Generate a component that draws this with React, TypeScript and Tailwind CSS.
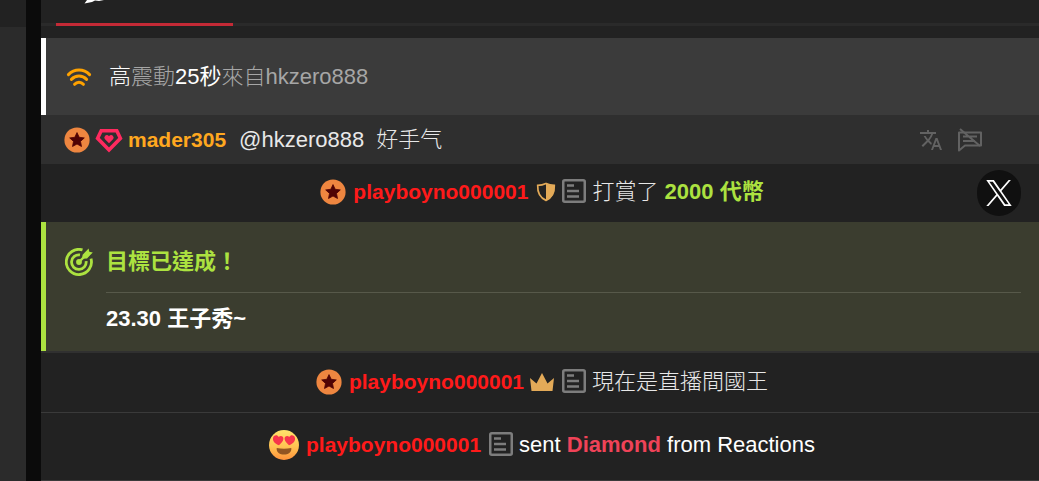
import type { ReactNode } from "react";
import { MdTranslate } from "react-icons/md";

function StarBadge() {
  return (
    <svg viewBox="0 0 26 26" className="size-[26px] shrink-0" aria-hidden="true">
      <circle cx="13" cy="13" r="12.6" fill="#ee8640" />
      <path
        d="M13 5.6l2.2 4.7 5.1.6-3.8 3.5 1 5.1-4.5-2.5-4.5 2.5 1-5.1-3.8-3.5 5.1-.6z"
        fill="#4f0304"
        stroke="#4f0304"
        strokeLinejoin="round"
        strokeWidth=".8"
      />
    </svg>
  );
}

function GemHeart() {
  return (
    <svg viewBox="0 0 28 26" className="h-[26px] w-7 shrink-0" aria-hidden="true">
      <path d="M6.2 3.7h15.6l3.6 7.6L14 23 2.6 11.3z" fill="none" stroke="#ff2a5f" strokeWidth="3.6" />
      <path
        d="M14 16.2l-4-4a2.5 2.5 0 0 1 0-3.3c1.1-1.2 3-1 4 .3 1-1.3 2.9-1.5 4-.3a2.5 2.5 0 0 1 0 3.3z"
        fill="#ff2a5f"
      />
    </svg>
  );
}

function Waves() {
  return (
    <svg viewBox="0 0 26 20" className="h-5 w-[26px] shrink-0" aria-hidden="true">
      <g fill="none" stroke="#ffa200" strokeWidth="3" strokeLinecap="round">
        <path d="M2.4 7.6c6-6.2 15.2-6.2 21.2 0" />
        <path d="M5.4 12.4c4.3-4.4 10.9-4.400 15.2 0" />
        <path d="M8.6 17.3c2.4-2.8 6.4-2.8 8.8 0" />
      </g>
    </svg>
  );
}

function ProfileNote() {
  return (
    <svg viewBox="0 0 24 24" className="mb-0.5 size-6 shrink-0" aria-hidden="true">
      <rect x="1.25" y="1.25" width="21.5" height="21.5" rx="1.5" fill="none" stroke="#7d7d7d" strokeWidth="2.5" />
      <path d="M5 6.5h7M5 12h12M5 17.5h12" stroke="#7d7d7d" strokeWidth="2.4" />
    </svg>
  );
}

function HalfShield() {
  return (
    <svg viewBox="0 0 20 20" className="size-5 shrink-0" aria-hidden="true">
      <path
        d="M10 1.5c2.8 1.4 5.6 1.9 8.3 1.9.3 6.8-1.5 12.1-8.3 15-6.8-2.9-8.6-8.2-8.3-15 2.7 0 5.5-.5 8.3-1.9z"
        fill="none"
        stroke="#e3aa58"
        strokeWidth="1.7"
      />
      <path d="M10 1.5c2.8 1.4 5.6 1.9 8.3 1.9.3 6.8-1.5 12.1-8.3 15z" fill="#e3aa58" />
    </svg>
  );
}

function Crown() {
  return (
    <svg viewBox="0 0 24 20" className="h-5 w-6 shrink-0" aria-hidden="true">
      <path d="M0 6l6.5 5.500L12 1l5.500 10.500L24 6l-1.500 13h-21z" fill="#e3aa58" />
    </svg>
  );
}

function Target() {
  return (
    <svg viewBox="0 0 28 28" className="size-7 shrink-0" aria-hidden="true">
      <g fill="none" stroke="#ace240" strokeWidth="2.8">
        <path d="M17.5 1.9A12.6 12.6 0 1 0 26 10.6" />
        <path d="M15 6.9A7.3 7.3 0 1 0 21.1 13.2" />
        <path d="M14 14l7-7" strokeWidth="2.4" />
      </g>
      <circle cx="14" cy="14" r="2.9" fill="#ace240" />
      <path d="M17 10.800l.6-4L23.600.4l.7 3.300 3.500.7-5.800 6z" fill="#ace240" />
    </svg>
  );
}

function IgnoreUser() {
  return (
    <svg viewBox="0 0 26 24" className="h-6 w-[26px]" aria-hidden="true">
      <g fill="none" stroke="#626262" strokeWidth="2">
        <path d="M2 4.500h22v13H8l-6 5z" strokeLinejoin="round" />
        <path d="M6 8.500h14M6 13h12M3 1l20 17" />
      </g>
    </svg>
  );
}

function HeartEyes() {
  return (
    <svg viewBox="0 0 30 30" className="size-[30px] shrink-0" aria-hidden="true">
      <defs>
        <linearGradient id="face" x1="0" y1="0" x2="0" y2="1">
          <stop offset="0" stopColor="#ffe26b" />
          <stop offset=".55" stopColor="#ffc352" />
          <stop offset="1" stopColor="#ff923b" />
        </linearGradient>
      </defs>
      <circle cx="15" cy="15" r="15" fill="url(#face)" />
      <path d="M7.7 18c4.7 1.100 9.900 1.100 14.600 0 1.200 8.800-15.800 8.800-14.600 0z" fill="#925522" />
      <path
        d="M10 15.300C6.200 13.700 3.600 11.400 4 8.200 4.500 4.800 8.400 4.400 9.700 7c1.900-2.200 5-.8 4.700 2.100-.2 2.200-2.400 4.400-4.400 6.200z"
        fill="#f7354b"
      />
      <path
        d="M20 15.300c3.800-1.600 6.400-3.900 6-7.100-.5-3.400-4.400-3.800-5.700-1.200-1.900-2.200-5-.8-4.700 2.100.2 2.200 2.400 4.400 4.400 6.200z"
        fill="#f7354b"
      />
    </svg>
  );
}

function XLogo() {
  return (
    <svg viewBox="0 0 1200 1227" className="h-[26px] w-[26px]" aria-hidden="true">
      <path
        fill="#fff"
        d="M714.163 519.284L1160.890 0H1055.030L667.137 450.887L357.328 0H0L468.492 681.821L0 1226.370H105.866L515.491 750.218L842.672 1226.370H1200L714.137 519.284H714.163ZM569.165 687.828L521.697 619.934L144.011 79.694H306.615L611.412 515.685L658.880 583.579L1055.080 1150.300H892.476L569.165 687.854V687.828Z"
      />
    </svg>
  );
}

function UserName({ children }: { children: ReactNode }) {
  return (
    <a href="#user" className="ml-[7px] text-[21px] font-bold text-[#ff1a1a]">
      {children}
    </a>
  );
}

function EventRow({ children, className }: { children: ReactNode; className: string }) {
  return <div className={`flex items-center justify-center pl-1 ${className}`}>{children}</div>;
}

export default function App() {
  return (
    <div className="flex min-h-screen bg-[#222] font-['Liberation_Sans','Noto_Sans_CJK_TC',sans-serif] text-[22px] leading-8 whitespace-nowrap text-[#e8e8e8]">
      <aside className="w-[26px] shrink-0 bg-[#2b2b2b]">
        <div className="h-[27px] bg-[#222]" />
      </aside>
      <div className="w-[15px] shrink-0 bg-[#0b0b0b]" />
      <main className="min-w-0 flex-1">
        <nav className="flex h-[26px] border-b-[3px] border-[#2a2a2a] pl-[15px]">
          <button type="button" aria-label="Chat" className="flex h-[26px] w-[177px] items-start border-b-[3px] border-[#c42a36] pl-7">
            <svg viewBox="0 0 20 4" className="h-1 w-5" aria-hidden="true">
              <path d="M3 0h17l-5 1-4-.4L8 2 .5 3.500z" fill="#fff" />
            </svg>
          </button>
        </nav>

        <section className="mt-3 flex items-center border-l-[5px] border-white bg-[#3b3b3b] pt-[23px] pb-[22px] pl-5 font-light">
          <Waves />
          <p className="ml-[17px] text-[#a6a6a6]">
            <span className="text-white">高</span>震動<span className="font-normal text-white">25秒</span>來自hkzero888
          </p>
        </section>

        <section className="flex items-center bg-[#2f2f2f] pt-[9px] pb-2 pr-14 pl-[23px]">
          <StarBadge />
          <span className="ml-[5px] flex">
            <GemHeart />
          </span>
          <a href="#user" className="ml-[5px] text-[21px] font-bold text-[#ffa81f]">
            mader305
          </a>
          <p className="ml-[13px] font-light">
            @hkzero888&nbsp; 好手气
          </p>
          <div className="ml-auto flex items-center gap-3.5">
            <button type="button" aria-label="Translate">
              <MdTranslate className="size-6 text-[#626262]" />
            </button>
            <button type="button" aria-label="Ignore user">
              <IgnoreUser />
            </button>
          </div>
        </section>

        <div className="relative">
          <EventRow className="pt-3 pb-3.5">
            <StarBadge />
            <UserName>playboyno000001</UserName>
            <span className="ml-2 flex items-center gap-1.5">
              <HalfShield />
              <ProfileNote />
            </span>
            <p className="ml-1.5 font-light">
              打賞了 <strong className="font-bold text-[#ace240]">2000 代幣</strong>
            </p>
          </EventRow>
          <a
            href="#x"
            aria-label="X"
            className="absolute top-1.5 right-[18px] flex h-[46px] w-11 items-center justify-center rounded-full bg-[#101010]"
          >
            <XLogo />
          </a>
        </div>

        <section className="flex items-start border-l-[5px] border-[#ace240] bg-[#3b3d2f] pt-6 pr-[18px] pb-4 pl-[19px] font-bold">
          <span className="mt-0.5 flex">
            <Target />
          </span>
          <div className="ml-[13px] flex-1">
            <h2 className="pb-3.5 text-[#ace240]">目標已達成！</h2>
            <p className="border-t border-[#57594a] pt-2.5 text-white">23.30 王子秀~</p>
          </div>
        </section>

        <EventRow className="border-t-2 border-b border-t-[#303030] border-b-[#3a3a3a] pt-[13px] pb-3.5">
          <StarBadge />
          <UserName>playboyno000001</UserName>
          <span className="ml-1.5 flex items-center gap-2">
            <Crown />
            <ProfileNote />
          </span>
          <p className="ml-1.5 font-light">現在是直播間國王</p>
        </EventRow>

        <EventRow className="border-b border-[#3a3a3a] pt-4 pb-[19px]">
          <HeartEyes />
          <UserName>playboyno000001</UserName>
          <span className="ml-2 flex">
            <ProfileNote />
          </span>
          <p className="ml-1.5 text-white">
            sent <strong className="text-[#f04358]">Diamond</strong> from Reactions
          </p>
        </EventRow>
      </main>
    </div>
  );
}
